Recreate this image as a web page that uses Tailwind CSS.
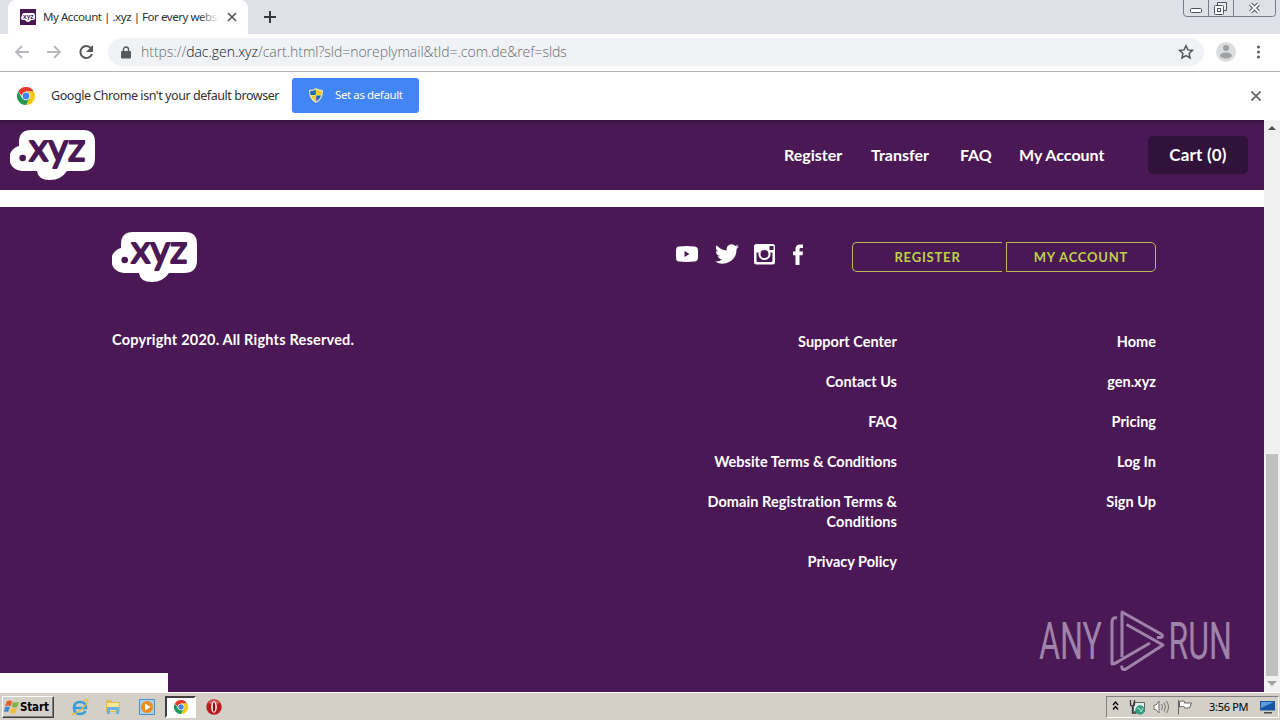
<!DOCTYPE html>
<html lang="en"><head><meta charset="utf-8"><title>My Account | .xyz</title>
<script src="https://cdn.jsdelivr.net/npm/@tailwindcss/browser@4"></script></head>
<body class="w-[1280px] h-[720px] overflow-hidden bg-white font-['Noto_Sans',sans-serif] text-[#303236]">
<svg class="hidden">
<symbol id="logo" viewBox="0 0 85 50"><path fill="#fff" d="M21 0H73Q85 0 85 12V28Q85 41 72 41H57Q51 50 40 50Q28 50 27 41H13A12.7 12.7 0 0 1 9 16V12Q9 0 21 0Z"/><circle cx="12.7" cy="28" r="3.3" fill="#4a1955"/><text x="19" y="30.700" font-family="Lato, sans-serif" font-weight="400" font-size="38" textLength="56.500" lengthAdjust="spacingAndGlyphs" fill="#4a1955" stroke="#4a1955" stroke-width="1.800" stroke-linejoin="round">xyz</text></symbol>
<symbol id="chrome" viewBox="0 0 18 18"><path fill="#e33b2e" d="M1.2 4.5A9 9 0 0 1 16.8 4.5H9L5 9Z"/><path fill="#f9c80e" d="M16.8 4.5A9 9 0 0 1 9 18L12.7 11 9 4.5Z"/><path fill="#219653" d="M1.2 4.5A9 9 0 0 0 9 18L12.7 11 5.3 11.2Z"/><circle cx="9" cy="9" r="4.3" fill="#fff"/><circle cx="9" cy="9" r="3.4" fill="#4285e8"/></symbol>
</svg>
<div class="flex h-[720px] flex-col">
<header class="relative flex h-[34px] shrink-0 bg-[#dee1e7]">
 <div class="ml-2 flex h-[34px] w-[240px] items-center rounded-t-lg bg-white pl-3">
  <svg class="h-4 w-4 shrink-0" viewBox="0 0 16 16"><path fill="#4a1955" d="M0 0h16v16H0z"/><path fill="#fff" d="M4 4h9q2 0 2 2v3q0 2-2 2h-2q-1 2-3 2t-3-2H3q-2 0-2-2 0-1 1-2 0-3 2-3z"/><text x="3" y="9.7" font-size="7" font-weight="700" font-family="Lato, sans-serif" fill="#4a1955">xyz</text></svg>
  <div class="relative ml-[7px] w-[176px] overflow-hidden whitespace-nowrap text-[11.500px] leading-5 tracking-[-0.45px]">My Account | .xyz | For every websi<span class="absolute inset-y-0 right-0 w-5 bg-linear-to-r from-white/0 to-white"></span></div>
  <svg class="ml-[8px] h-[10px] w-[10px]" viewBox="0 0 10 10" stroke="#505357" stroke-width="1.6"><path d="M1 1l8 8M9 1L1 9"/></svg>
 </div>
 <svg class="mt-[11px] ml-[16px] h-3 w-3" viewBox="0 0 12 12" stroke="#35383c" stroke-width="2"><path d="M6 0v12M0 6h12"/></svg>
 <svg class="absolute top-0 left-[1183px] h-[17px] w-[93px]" viewBox="0 0 93 17" fill="none" stroke="#777b87"><path d="M.5 0v13q0 3.500 3 3.500h86q3 0 3-3V0M25.500 0v16M50.500 0v16"/><g stroke="#4e5360"><rect x="7.500" y="8.500" width="11" height="4" rx="1" fill="#fff"/><path d="M34.500 5.500V2.500h9v8h-3" fill="#eee"/><rect x="31.500" y="5.500" width="9" height="9" rx="1" fill="#fff"/><rect x="34.500" y="8.500" width="3" height="3"/></g><path d="M67.500 4l8 8M75.500 4l-8 8" stroke="#555a66" stroke-width="4"/><path d="M67.500 4l8 8M75.500 4l-8 8" stroke="#fff" stroke-width="2"/></svg>
</header>
<div class="flex h-[38px] shrink-0 items-center border-b border-[#b3b4b6] bg-white pb-px">
 <svg class="ml-[14px] h-4 w-[84px]" viewBox="0 0 84 16" fill="none"><path d="M15 8H2M8 2L2 8l6 6M33 8h13M40 2l6 6-6 6" stroke="#b9babd" stroke-width="1.800"/><path d="M77 4.200A6 6 0 1 0 78 10" stroke="#55585c" stroke-width="2"/><path d="M79 1v7h-7z" fill="#55585c"/></svg>
 <div class="ml-[10px] flex h-7 w-[1096px] items-center rounded-full bg-[#f0f2f5] pl-[13px]">
  <svg class="h-[13px] w-[10px]" viewBox="0 0 10 13"><path d="M1 5h8q1 0 1 1v5.500q0 1-1 1H1q-1 0-1-1V6q0-1 1-1z" fill="#56595d"/><path d="M2.500 6V3.500a2.500 2.500 0 0 1 5 0V6" fill="none" stroke="#56595d" stroke-width="1.400"/></svg>
  <div class="ml-[10px] w-[430px] whitespace-nowrap font-['Open_Sans',sans-serif] text-[14px] font-light leading-5 tracking-[-0.03px] text-[#686b70]">https://<span class="text-[#17181a]">dac.gen.xyz</span>/cart.html?sld=noreplymail&amp;tld=.com.de&amp;ref=slds</div>
  <svg class="ml-[607px] h-4 w-4" viewBox="0 0 16 16" fill="none" stroke="#55585c" stroke-width="1.500"><path d="M8 1.700l1.900 4.200 4.600.5-3.400 3 1 4.600L8 11.600 3.900 14l1-4.600-3.400-3 4.600-.5z"/></svg>
 </div>
 <svg class="ml-3 h-5 w-5" viewBox="0 0 20 20"><circle cx="10" cy="10" r="10" fill="#dcdddf"/><circle cx="10" cy="6" r="3" fill="#a0a1a3"/><ellipse cx="10" cy="13.500" rx="6" ry="3" fill="#a0a1a3"/></svg>
 <svg class="ml-[16px] h-4 w-4" viewBox="0 0 16 16" fill="#55585c"><circle cx="6.500" cy="3" r="1.500"/><circle cx="6.500" cy="8" r="1.500"/><circle cx="6.500" cy="13" r="1.500"/></svg>
</div>
<div class="flex h-[48px] shrink-0 items-center bg-white pl-[17px]">
 <svg class="h-[18px] w-[18px]"><use href="#chrome"/></svg>
 <span class="ml-4 w-[241px] whitespace-nowrap text-[12.500px] tracking-[-0.44px]">Google Chrome isn't your default browser</span>
 <div class="-mt-px flex h-[35px] w-[127px] items-center rounded-[3px] bg-[#4285f4] pl-[17px] text-white">
  <svg class="h-[15px] w-[14px]" viewBox="0 0 14 15"><path d="M7 0q3 2 7 2 0 10-7 13Q0 12 0 2q4 0 7-2z" fill="#e9e6c2"/><path d="M6.800 1.500V7H1.500q-.5-2-.3-4 3 0 5.600-1.500zM7.200 7.500h5q-1.300 4-5 6z" fill="#2869b5"/><path d="M7.200 1.500q2.600 1.500 5.600 1.500.1 2-.4 4H7.200zM1.800 7.500h5v6q-3.700-2-5-6z" fill="#f8cb26"/></svg>
  <span class="ml-[12px] -mt-px whitespace-nowrap text-[11.500px] tracking-[-0.4px]">Set as default</span>
 </div>
 <svg class="ml-[832px] h-[10px] w-[10px]" viewBox="0 0 10 10" stroke="#5f6165" stroke-width="1.700"><path d="M.5.500l9 9M9.500.500l-9 9"/></svg>
</div>
<div class="flex h-[572px] shrink-0">
 <main class="relative flex w-[1264px] flex-col font-[Lato,sans-serif] font-bold text-white">
  <nav class="flex h-[70px] shrink-0 items-center bg-[#4a1955] pl-[10px] text-[16px] shadow-[inset_0_5px_4px_-4px_#28102e]">
   <svg class="h-[50px] w-[85px]"><use href="#logo"/></svg>
   <span class="ml-[689px] w-[87px]">Register</span><span class="w-[89px]">Transfer</span><span class="w-[59px]">FAQ</span><span class="w-[129px]">My Account</span>
   <span class="flex h-[38px] w-[100px] items-center justify-center rounded-[5px] bg-[#30123a] text-[17px] tracking-[.2px]">Cart (0)</span>
  </nav>
  <div class="h-[17px] shrink-0 bg-white"></div>
  <footer class="flex flex-1 flex-col bg-[#4a1955]">
   <div class="flex h-[123px] items-start pt-[25px] pl-[112px]">
    <svg class="h-[50px] w-[85px]"><use href="#logo"/></svg>
    <svg class="mt-[10px] ml-[478px] h-6 w-[132px]" viewBox="0 0 132 24" fill="#fff"><path fill-rule="evenodd" d="M4 4.500q8-.8 15 0 4 0 4 4v7q0 4-4 4-7 .8-15 0-3 0-3-4v-7q0-4 3-4zM9.500 9v6l5-3z"/><path transform="translate(40 0)" d="M24 4.600a10 10 0 0 1-2.800.8 4.900 4.900 0 0 0 2.100-2.700 10 10 0 0 1-3.100 1.200 4.900 4.900 0 0 0-8.400 4.500A14 14 0 0 1 1.700 3.200a4.900 4.900 0 0 0 1.500 6.500 5 5 0 0 1-2.200-.6 4.900 4.900 0 0 0 3.900 4.900 5 5 0 0 1-2.200.1 4.900 4.900 0 0 0 4.600 3.400A10 10 0 0 1 0 19.500 14 14 0 0 0 21.500 7.100 10 10 0 0 0 24 4.600z"/><path fill-rule="evenodd" d="M81.500 2h16q2.500 0 2.500 2.500V20q0 2.500-2.500 2.500h-16Q79 22.500 79 20V4.500Q79 2 81.500 2zM94.500 4v4h4V4zM81.500 10.500v8q0 1.500 1.500 1.500h13q1.500 0 1.500-1.500v-8h-2.200a6 6 0 1 1-11.600 0zM89.500 8a4 4 0 1 0 0 8 4 4 0 0 0 0-8z"/><path d="M120.500 23v-9.700H118V9.500h2.500V7q0-4.500 4.500-4.500h3v3.600h-2.200q-1.300 0-1.300 1.400v2h3.500l-.5 3.800h-3V23z"/></svg>
    <div class="mt-[10px] ml-[45px] flex h-[30px] gap-1 text-[13px] tracking-[.8px] text-[#bfd04a]"><span class="flex w-[150px] items-center justify-center rounded-l-[5px] border border-r-0 border-[#b9bd50] pt-px">REGISTER</span><span class="flex w-[150px] items-center justify-center rounded-r-[5px] border border-[#b9bd50] pt-px">MY ACCOUNT</span></div>
   </div>
   <div class="flex pl-[112px] text-[14.500px] leading-5">
    <p class="w-[560px] tracking-[.2px]">Copyright 2020. All Rights Reserved.</p>
    <ul class="mt-[2px] flex w-[225px] flex-col items-end gap-5 whitespace-nowrap text-right"><li>Support Center</li><li>Contact Us</li><li>FAQ</li><li>Website Terms &amp; Conditions</li><li class="tracking-[.07px]">Domain Registration Terms &amp;<br>Conditions</li><li>Privacy Policy</li></ul>
    <ul class="mt-[2px] flex w-[259px] flex-col items-end gap-5"><li>Home</li><li>gen.xyz</li><li>Pricing</li><li>Log In</li><li>Sign Up</li></ul>
   </div>
  </footer>
  <div class="absolute bottom-0 left-0 h-[19px] w-[168px] bg-white"></div>
  <svg class="absolute top-[480px] left-[1030px] h-[80px] w-[210px]" viewBox="1030 600 210 80" fill="none" stroke="#a083aa"><g fill="#a083aa" stroke="none" font-family="Roboto, sans-serif" font-size="51" font-weight="400"><text x="1039" y="659" textLength="63" lengthAdjust="spacingAndGlyphs">ANY</text><text x="1168.500" y="659" textLength="63.500" lengthAdjust="spacingAndGlyphs">RUN</text></g><path stroke-width="3" stroke-linejoin="round" d="M1117 618q-5-1-5 4v42q3 0 7-3l31-18M1122 657V612l39 22q3 2 0 3.500h-4M1122 665.500q-1 5.500 4 3.500l37-24-36.500-20.500"/></svg>
 </main>
 <aside class="flex w-4 flex-col items-center bg-[#f1f1f1]">
  <svg class="mt-[6px] h-[5px] w-[8px]" viewBox="0 0 10 6"><path d="M5 0l5 5H0z" fill="#505050"/></svg>
  <div class="mt-[323px] h-[222px] w-3 bg-[#c1c1c1]"></div>
  <svg class="mt-[5px] h-[6px] w-[10px]" viewBox="0 0 10 6"><path d="M0 0h10L5 5z" fill="#a3a3a3"/></svg>
 </aside>
</div>
<footer class="flex h-7 shrink-0 items-center border-t border-white bg-[#d4d0c8] pt-px pl-[2px] shadow-[inset_0_1px_#d4d0c8] text-black">
 <div class="flex h-[22px] w-[52px] items-center border border-t-white border-l-white border-r-[#404040] border-b-[#404040] pl-[1px] font-['DejaVu_Sans_Condensed','DejaVu_Sans',sans-serif] text-[11.500px] font-bold shadow-[inset_-1px_-1px_#808080]">
  <svg class="h-4 w-4 shrink-0" viewBox="0 0 16 16"><path d="M3 2q3-1 5 0L7 7Q4 6 1 7z" fill="#e65b2a"/><path d="M9 3q3 1 6 0l-2 5q-3 1-5 0z" fill="#7db53c"/><path d="M1 8q3-1 5 0l-2 5q-2-1-4 0z" fill="#4087cc"/><path d="M7 9q3 1 6 0l-2 5q-3 1-5 0z" fill="#f2bd2c"/></svg><span class="mt-px tracking-[-0.15px]">Start</span>
 </div>
 <svg class="ml-[17px] h-[18px] w-[18px]" viewBox="0 0 18 18" fill="none"><path d="M4 10h11q0-6-6-6t-6 6 6 6q4 0 5.500-3" stroke="#399bd9" stroke-width="2.600"/><path d="M2 15Q-1 18 5 15 15 9 17 3q0-3-5 0" stroke="#e7bd3d" stroke-width="1.300"/></svg>
 <svg class="ml-[16px] h-[18px] w-[16px]" viewBox="0 0 16 18"><path d="M1 3l1-1h4l1 2h8v10H1z" fill="#dfbd50"/><path d="M2 5h12v8H2z" fill="#f8e69b"/><path d="M2 9h12v7h-3v-4H5v4H2z" fill="#65b6df"/></svg>
 <svg class="ml-[18px] h-4 w-4" viewBox="0 0 16 16"><path d="M.5.500h15v15H.500z" fill="#a9d0f0" stroke="#4b8fcc"/><circle cx="8" cy="8" r="6" fill="#ed8a20"/><path d="M6 4.500v7l5.500-3.500z" fill="#fff"/></svg>
 <div class="ml-[10px] flex h-[22px] w-[31px] items-center justify-center border-2 border-t-[#404040] border-l-[#404040] border-r-white border-b-white bg-white"><svg class="h-[14px] w-[14px]"><use href="#chrome"/></svg></div>
 <svg class="ml-[10px] h-4 w-4" viewBox="0 0 16 16"><circle cx="8" cy="8" r="7.700" fill="#b51d20"/><path d="M2 4Q8-2 14 4 8 6 2 4z" fill="#df6060"/><ellipse cx="8" cy="8" rx="2.800" ry="5.800" fill="#fff"/><ellipse cx="8" cy="8" rx="1.300" ry="4.800" fill="#8c1217"/></svg>
 <div class="mr-[1px] ml-auto flex h-[22px] w-[173px] items-center border border-t-[#808080] border-l-[#808080] border-r-white border-b-white">
  <svg class="ml-[5px] h-3 w-[7px]" viewBox="0 0 7 12" fill="none" stroke="#000" stroke-width="1.300"><path d="M1 4l2.500-3L6 4M1 8.500l2.500-3L6 8.500"/></svg>
  <svg class="ml-[10px] h-4 w-4" viewBox="0 0 16 16"><path d="M4.500 3.500h11v9h-11z" fill="#e4eee9" stroke="#596866"/><path d="M1.500 1v4q0 2 2 2t2-2V1M3.500 7v7h4" fill="none" stroke="#383838" stroke-width="1.300"/><circle cx="11" cy="11" r="4.700" fill="#329d83"/><path d="M8 9l3 1 1 3 2-4" stroke="#b3e3c7" fill="none"/></svg>
  <svg class="ml-[8px] h-[14px] w-4" viewBox="0 0 16 14" fill="none" stroke="#717171"><path d="M1 5h2l3-4v12L3 9.500H1z" fill="#fff"/><path d="M8.500 4q2 3 0 6M11 2.500q3 4.500 0 9M13.500 1q4 6 0 12"/></svg>
  <svg class="ml-[8px] h-4 w-4" viewBox="0 0 16 16" fill="#fff" stroke="#666"><path d="M1.500 1v14.500M2.500 2.500q3-1 5 0v1.500h7l-2 5h-5V8q-2-1-5 0z"/></svg>
  <span class="ml-[16px] w-[51px] whitespace-nowrap text-[11px] tracking-[-0.3px]">3:56 PM</span>
  <svg class="h-[13px] w-[15px]" viewBox="0 0 15 13"><path d="M0 0h15v9.500H0z" fill="#1756a4"/><path d="M1 1h13L1 7z" fill="#5b9ddc"/><path d="M4 11h8v1.500H4z" fill="#444"/></svg>
 </div>
</footer>
</div></body></html>
